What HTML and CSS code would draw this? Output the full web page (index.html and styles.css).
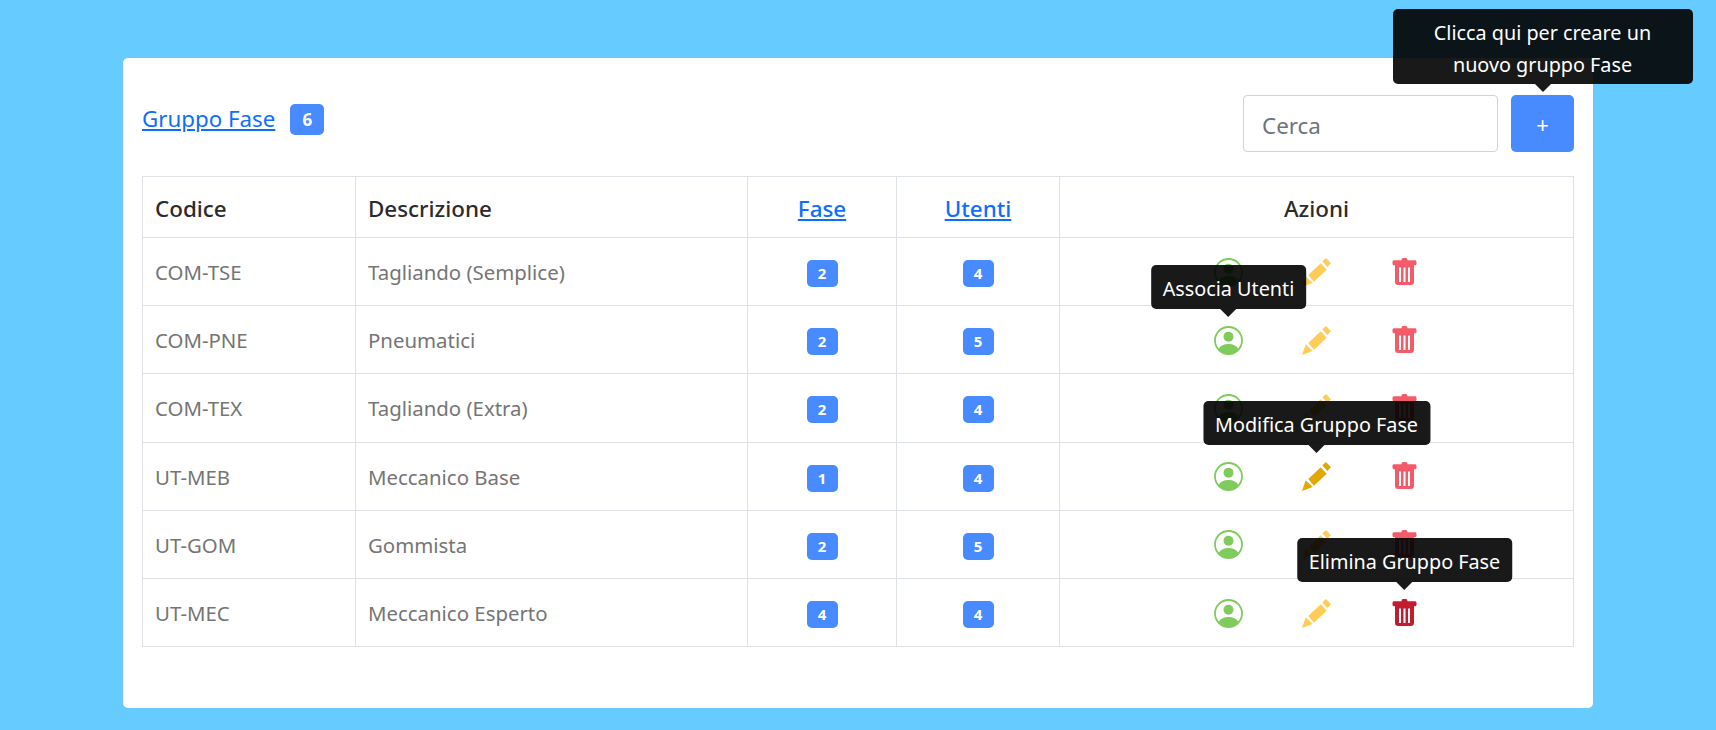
FILE: index.html
```html
<!DOCTYPE html>
<html lang="it">
<head>
  <meta charset="UTF-8">
  <title>Gruppo Fase</title>
  <link rel="stylesheet" href="styles.css">
</head>
<body>
  <svg class="defs" width="0" height="0">
    <symbol id="icoUser" viewBox="0 0 29 29">
      <circle cx="14.5" cy="14.5" r="13.5" fill="none" stroke="currentColor" stroke-width="1.8"/>
      <circle cx="14.5" cy="10.8" r="5" fill="currentColor"/>
      <path d="M4.6 22.8C6.5 19.6 10 18 14.5 18s8 1.6 9.9 4.8C22 26 18.500 28 14.500 28s-7.500-2-9.900-5.200z" fill="currentColor"/>
    </symbol>
    <symbol id="icoEdit" viewBox="0 0 29 29">
      <path d="M0 29l3.700-10.700 7 6.700z" fill="currentColor"/>
      <path d="M6.300 17L18.700 5.300l6 6.400L12 23.700z" fill="currentColor"/>
      <path d="M20.300 3.300L24 0l5 5.300L25.300 9z" fill="currentColor"/>
    </symbol>
    <symbol id="icoTrash" viewBox="0 0 24 27">
      <path d="M9 2.200C9 .8 9.800 0 10.500 0h3c.7 0 1.500.8 1.500 2.200h7.500c.8 0 1.500.7 1.500 1.500v2c0 .8-.7 1.500-1.500 1.500H21.500V24c0 1.700-1.300 3-3 3h-13c-1.700 0-3-1.300-3-3V7.200H1.500C.7 7.200 0 6.500 0 5.700v-2c0-.8.7-1.500 1.500-1.500z" fill="currentColor"/>
      <path d="M6.500 9.500h2V24h-2zM11 9.500h2V24h-2zM15.500 9.500h2V24h-2z" fill="#fff"/>
    </symbol>
  </svg>

  <div class="card">
    <div class="card-top">
      <div class="title">
        <a href="#">Gruppo Fase</a>
        <span class="badge badge-big">6</span>
      </div>
      <div class="tools">
        <input class="search" type="text" placeholder="Cerca">
        <div class="tip-wrap">
          <button class="add-btn">+</button>
          <div class="tip tip-add">Clicca qui per creare un nuovo gruppo Fase</div>
        </div>
      </div>
    </div>

    <table class="grid">
      <colgroup>
        <col class="col-code"><col class="col-desc"><col class="col-fase"><col class="col-ut"><col class="col-act">
      </colgroup>
      <thead>
        <tr>
          <th>Codice</th>
          <th>Descrizione</th>
          <th class="mid"><a href="#">Fase</a></th>
          <th class="mid"><a href="#">Utenti</a></th>
          <th class="mid">Azioni</th>
        </tr>
      </thead>
      <tbody>
        <tr>
          <td>COM-TSE</td><td>Tagliando (Semplice)</td>
          <td class="mid"><span class="badge">2</span></td>
          <td class="mid"><span class="badge">4</span></td>
          <td><div class="actions">
            <svg class="ico user"><use href="#icoUser"/></svg>
            <svg class="ico edit"><use href="#icoEdit"/></svg>
            <svg class="ico trash"><use href="#icoTrash"/></svg>
          </div></td>
        </tr>
        <tr>
          <td>COM-PNE</td><td>Pneumatici</td>
          <td class="mid"><span class="badge">2</span></td>
          <td class="mid"><span class="badge">5</span></td>
          <td><div class="actions">
            <div class="tip-wrap">
              <svg class="ico user"><use href="#icoUser"/></svg>
              <div class="tip">Associa Utenti</div>
            </div>
            <svg class="ico edit"><use href="#icoEdit"/></svg>
            <svg class="ico trash"><use href="#icoTrash"/></svg>
          </div></td>
        </tr>
        <tr>
          <td>COM-TEX</td><td>Tagliando (Extra)</td>
          <td class="mid"><span class="badge">2</span></td>
          <td class="mid"><span class="badge">4</span></td>
          <td><div class="actions">
            <svg class="ico user"><use href="#icoUser"/></svg>
            <svg class="ico edit"><use href="#icoEdit"/></svg>
            <svg class="ico trash"><use href="#icoTrash"/></svg>
          </div></td>
        </tr>
        <tr>
          <td>UT-MEB</td><td>Meccanico Base</td>
          <td class="mid"><span class="badge">1</span></td>
          <td class="mid"><span class="badge">4</span></td>
          <td><div class="actions">
            <svg class="ico user"><use href="#icoUser"/></svg>
            <div class="tip-wrap">
              <svg class="ico edit is-hover"><use href="#icoEdit"/></svg>
              <div class="tip">Modifica Gruppo Fase</div>
            </div>
            <svg class="ico trash"><use href="#icoTrash"/></svg>
          </div></td>
        </tr>
        <tr>
          <td>UT-GOM</td><td>Gommista</td>
          <td class="mid"><span class="badge">2</span></td>
          <td class="mid"><span class="badge">5</span></td>
          <td><div class="actions">
            <svg class="ico user"><use href="#icoUser"/></svg>
            <svg class="ico edit"><use href="#icoEdit"/></svg>
            <svg class="ico trash"><use href="#icoTrash"/></svg>
          </div></td>
        </tr>
        <tr>
          <td>UT-MEC</td><td>Meccanico Esperto</td>
          <td class="mid"><span class="badge">4</span></td>
          <td class="mid"><span class="badge">4</span></td>
          <td><div class="actions">
            <svg class="ico user"><use href="#icoUser"/></svg>
            <svg class="ico edit"><use href="#icoEdit"/></svg>
            <div class="tip-wrap">
              <svg class="ico trash is-hover"><use href="#icoTrash"/></svg>
              <div class="tip">Elimina Gruppo Fase</div>
            </div>
          </div></td>
        </tr>
      </tbody>
    </table>
  </div>
</body>
</html>
```
FILE: styles.css
```css
* {
  box-sizing: border-box;
}

html, body {
  height: 100%;
}

body {
  margin: 0;
  padding: 58px 123px 0;
  background: #66ccff;
  font-family: "Noto Sans", "Open Sans", sans-serif;
  color: #212529;
  overflow: hidden;
}

.defs {
  position: absolute;
}

.card {
  height: 650px;
  padding: 37px 19px 0;
  background: #fff;
  border-radius: 5px;
}

.card-top {
  display: flex;
  justify-content: space-between;
  align-items: flex-start;
  height: 81px;
}

.title {
  display: flex;
  align-items: center;
  gap: 15px;
  margin-top: 7px;
  font-size: 22.3px;
}

.title .badge {
  margin-top: 2px;
}

a {
  color: #0d6efd;
}

.tools {
  display: flex;
  gap: 13px;
}

.search {
  width: 255px;
  height: 57px;
  padding: 4px 18px 0;
  border: 1px solid #ced4da;
  border-radius: 4px;
  font: inherit;
  font-size: 22.4px;
}

.search::placeholder {
  color: #6c757d;
}

.add-btn {
  display: block;
  width: 63px;
  height: 57px;
  padding: 0;
  border: 0;
  border-radius: 5px;
  background: #488aff;
  color: #fff;
  font: inherit;
  font-size: 22px;
}

.badge {
  display: inline-block;
  width: 31px;
  height: 27px;
  border-radius: 5px;
  background: #488aff;
  color: #fff;
  font-size: 15px;
  font-weight: 700;
  line-height: 27px;
  text-align: center;
  vertical-align: middle;
}

.badge-big {
  width: 34px;
  height: 31px;
  font-size: 17px;
  line-height: 31px;
}

.grid {
  width: 1431px;
  border-collapse: collapse;
  table-layout: fixed;
}

.col-code { width: 213px; }
.col-desc { width: 392px; }
.col-fase { width: 149px; }
.col-ut { width: 163px; }
.col-act { width: 514px; }

.grid th, .grid td {
  padding: 0 12px;
  border: 1px solid #dee2e6;
  text-align: left;
}

.grid th {
  height: 61px;
  padding-top: 2px;
  font-size: 22.4px;
  font-weight: 500;
  color: #2b2b2b;
}

.grid td {
  height: 68.2px;
  padding-top: 1px;
  font-size: 20.4px;
  color: #757575;
}

.grid .mid {
  text-align: center;
}

.actions {
  display: flex;
  justify-content: center;
  gap: 59px;
}

.tip-wrap {
  position: relative;
  display: flex;
}

.ico {
  display: block;
  width: 29px;
  height: 29px;
}

.user { color: #7fcb5b; }
.edit { color: #ffcc55; }
.trash { color: #f45b69; height: 27px; }
.edit.is-hover { color: #e0a800; }
.trash.is-hover { color: #c21c2f; }

.tip {
  position: absolute;
  left: 50%;
  bottom: calc(100% + 17px);
  transform: translateX(-50%);
  padding: 8px 12px 4px;
  border-radius: 5px;
  background: rgba(0, 0, 0, 0.9);
  color: #fff;
  font-size: 19.8px;
  line-height: 32px;
  white-space: nowrap;
  text-align: center;
}

.tip::after {
  content: "";
  position: absolute;
  left: 50%;
  top: 100%;
  margin-left: -8px;
  border: 8px solid transparent;
  border-bottom: 0;
  border-top-color: rgba(0, 0, 0, 0.9);
}

.tip-add {
  bottom: calc(100% + 11px);
  width: 300px;
  padding: 8px 40px 3px;
  white-space: normal;
}
```
